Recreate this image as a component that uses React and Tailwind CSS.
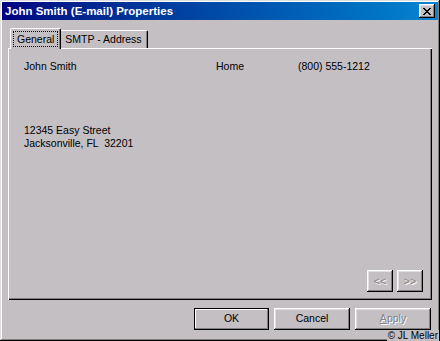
import React from "react";

const bevelBtn =
  "shadow-[inset_-1px_-1px_#000,inset_1px_1px_#fff,inset_-2px_-2px_#808080,inset_2px_2px_#dfdfdf]";

function NavBtn({ label }) {
  return (
    <div
      className={`w-[26px] h-[22px] flex items-center justify-center bg-[#c3bfc3] ${bevelBtn} text-[10.5px] text-[#858185] [text-shadow:1px_1px_#fff]`}
    >
      {label}
    </div>
  );
}

export default function App() {
  return (
    <div className="w-[440px] h-[341px] bg-[#c3bfc3] p-[2px] flex flex-col relative shadow-[inset_-1px_-1px_#000,inset_1px_1px_#dfdfdf,inset_-2px_-2px_#808080,inset_2px_2px_#fff] font-['Liberation_Sans',Arial,sans-serif] text-black overflow-hidden">
      {/* Title bar */}
      <div className="h-[18px] bg-linear-to-r from-[#000080] to-[#1084d0] flex items-center justify-between pl-[3px] pr-[3px]">
        <span className="text-white font-bold text-[11.5px] leading-none mt-[1px]">
          John Smith (E-mail) Properties
        </span>
        <div className={`w-[16px] h-[14px] bg-[#c3bfc3] ${bevelBtn} flex items-center justify-center`}>
          <svg width="8" height="7" viewBox="0 0 8 7" shapeRendering="crispEdges">
            <path
              d="M0 0h2v1H0zM6 0h2v1H6zM1 1h2v1H1zM5 1h2v1H5zM2 2h4v1H2zM3 3h2v1H3zM2 4h4v1H2zM1 5h2v1H1zM5 5h2v1H5zM0 6h2v1H0zM6 6h2v1H6z"
              fill="#000"
            />
          </svg>
        </div>
      </div>

      {/* Body */}
      <div className="flex-1 flex flex-col pl-[6px] pr-[6px] pt-[8px]">
        {/* Tabs */}
        <div className="flex items-end h-[20px] pl-[2px] relative z-10">
          <div className="h-[21px] -mb-[1px] px-[2px] pt-[2px] bg-[#c3bfc3] border-l border-t border-white border-r border-r-black rounded-tl-[2px] rounded-tr-[2px] shadow-[inset_-1px_0_#808080]">
            <div className="h-[16px] px-[3px] flex items-center border border-dotted border-black text-[10.5px] leading-none">
              General
            </div>
          </div>
          <div className="h-[18px] pl-[4px] pr-[5px] flex items-center bg-[#c3bfc3] border-t border-white border-r border-r-black rounded-tr-[2px] shadow-[inset_-1px_0_#808080] text-[10.5px] leading-none">
            SMTP - Address
          </div>
        </div>

        {/* Panel */}
        <div className="h-[252px] flex flex-col shadow-[inset_1px_1px_#fff,inset_-1px_-1px_#000,inset_-2px_-2px_#808080] pt-[12px] pl-[16px] pr-[9px] pb-[8px] text-[10.5px] leading-[13px]">
          <div className="flex">
            <div className="w-[192px]">John Smith</div>
            <div className="w-[82px]">Home</div>
            <div>(800) 555-1212</div>
          </div>
          <div className="mt-[51px]">
            <div>12345 Easy Street</div>
            <div className="whitespace-pre">Jacksonville, FL  32201</div>
          </div>
          <div className="mt-auto flex justify-end gap-[4px]">
            <NavBtn label="<<" />
            <NavBtn label=">>" />
          </div>
        </div>

        {/* Dialog buttons */}
        <div className="mt-[8px] flex justify-end gap-[5px] pr-[1px] text-[10.5px]">
          <div className="w-[75px] h-[22px] border border-black bg-[#c3bfc3] shadow-[inset_-1px_-1px_#808080,inset_1px_1px_#fff] flex items-center justify-center">
            OK
          </div>
          <div className={`w-[76px] h-[22px] bg-[#c3bfc3] ${bevelBtn} flex items-center justify-center`}>
            Cancel
          </div>
          <div className={`w-[76px] h-[22px] bg-[#c3bfc3] ${bevelBtn} flex items-center justify-center text-[#858185] [text-shadow:1px_1px_#fff]`}>
            <span><span className="underline">A</span>pply</span>
          </div>
        </div>
      </div>

      {/* Watermark */}
      <div className="absolute right-[1px] bottom-[0px] text-[10px] leading-[11px] text-black bg-[#c3bfc3] px-[1px]">
        © JL Meller
      </div>
    </div>
  );
}
